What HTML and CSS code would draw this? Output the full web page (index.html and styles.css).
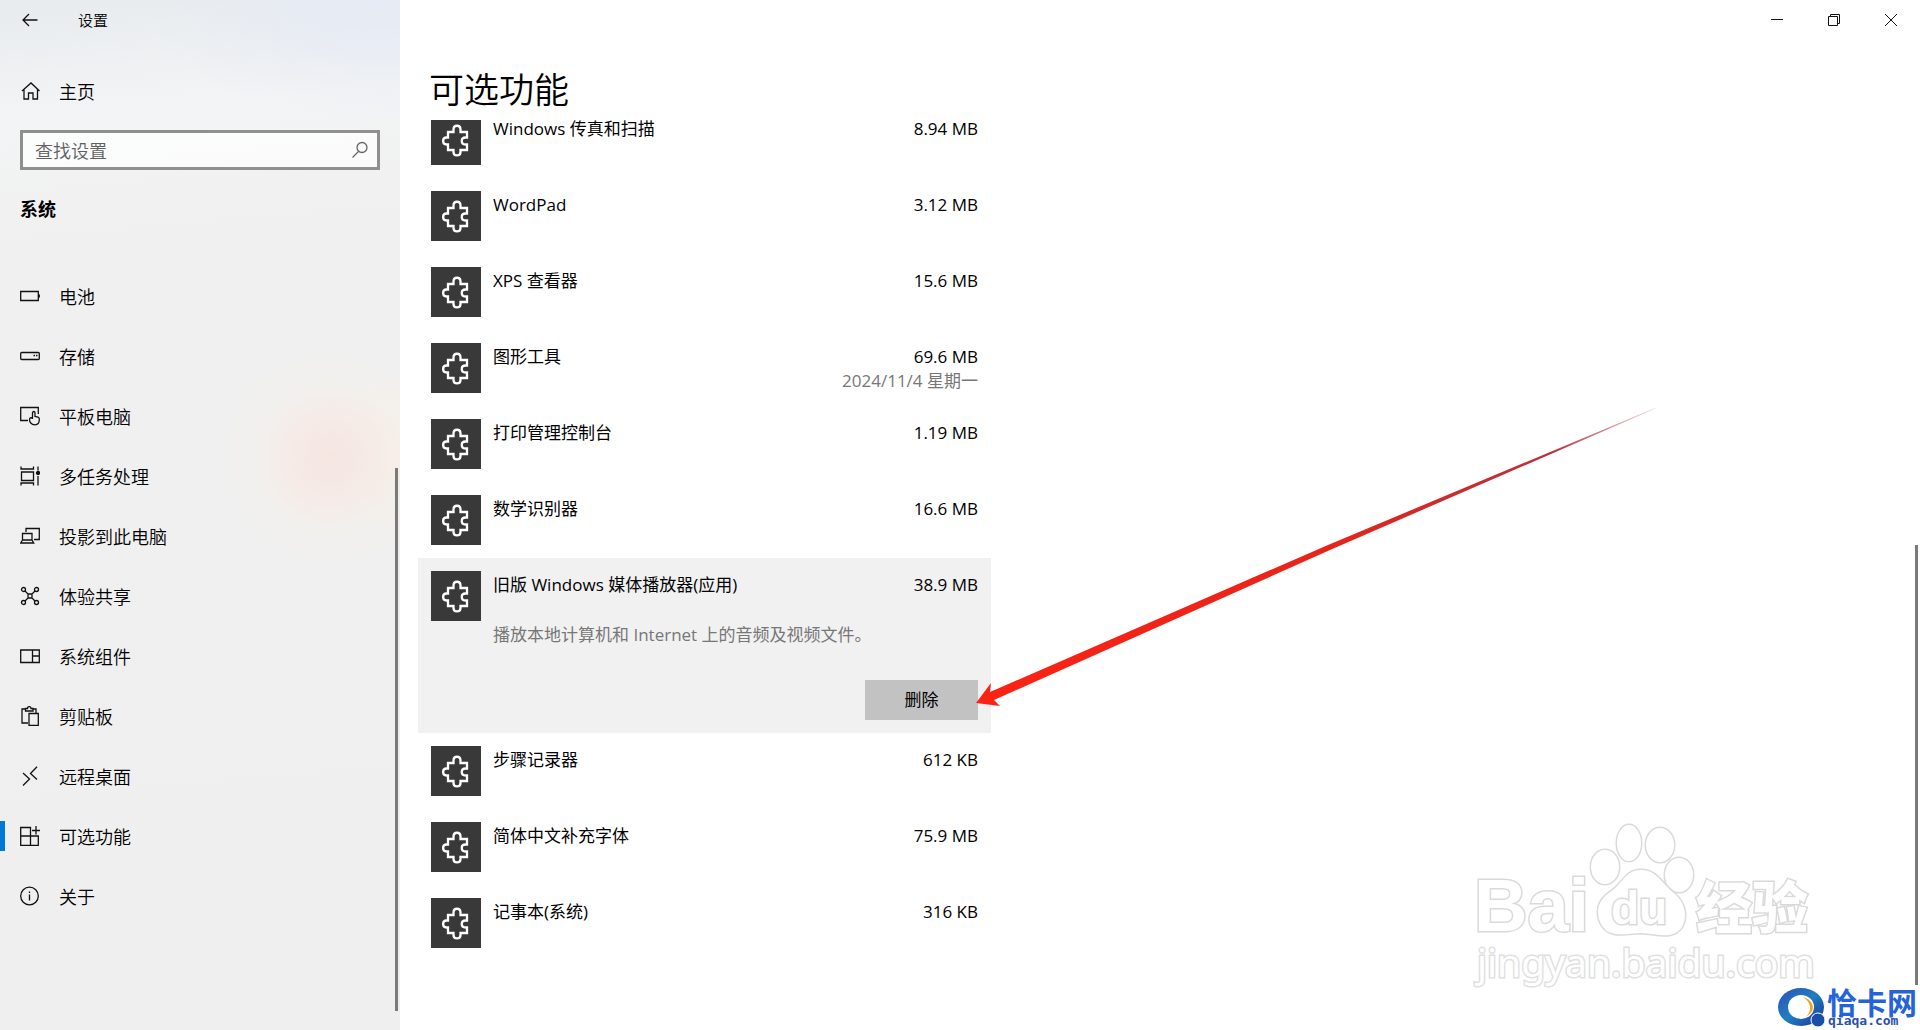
FILE: index.html
```html
<!DOCTYPE html>
<html lang="zh-CN">
<head>
    <meta charset="UTF-8">
    <meta name="viewport" content="width=device-width, initial-scale=1.0">
    <title>设置</title>
    <link rel="stylesheet" href="styles.css">
</head>
<body>
    <!-- shared icon for every feature row -->
    <svg class="sprite" width="0" height="0" aria-hidden="true">
        <symbol id="puzzle" viewBox="0 0 50 50">
            <path d="M17 17H22.5V14.5C22.5 9.5 29.5 9.5 29.5 14.5V17H36V22.5H34.5C29.500 22.5 29.500 29.5 34.5 29.5H36V35H29.5V37C29.5 41.500 22.5 41.500 22.5 37V35H17V29.5H15.5C11 29.5 11 22.5 15.5 22.5H17Z" fill="none" stroke="#fff" stroke-width="2.3"/>
        </symbol>
    </svg>

    <div class="window">
        <aside class="sidebar">
            <div class="app-bar">
                <button class="back" aria-label="返回">
                    <svg width="16" height="14" viewBox="0 0 16 14"><path d="M15.5 7H1M7 1L1 7l6 6"/></svg>
                </button>
                <span class="app-name">设置</span>
            </div>

            <a href="#" class="nav-item home">
                <svg width="20" height="20" viewBox="0 0 20 20"><path d="M2 10L11 2l8.500 8M4 8.500v9.500h4.500v-6h4.500v6h4.500V8.500"/></svg>
                主页
            </a>

            <div class="search">
                <input type="text" id="search" placeholder="查找设置" aria-label="查找设置">
                <svg width="18" height="18" viewBox="0 0 18 18"><circle cx="11" cy="6.500" r="5"/><path d="M7.500 10.500L1.500 16.500"/></svg>
            </div>

            <h2>系统</h2>

            <nav>
                <a href="#" class="nav-item">
                    <svg width="20" height="20" viewBox="0 0 20 20"><path d="M.7 5.500h17.600v9H.7zM19.300 8.500v3"/></svg>
                    电池
                </a>
                <a href="#" class="nav-item">
                    <svg width="20" height="20" viewBox="0 0 20 20"><rect x=".7" y="6.500" width="18.600" height="7" rx="1"/><path d="M13.500 9.500h1.500M16 9.500h1.500"/></svg>
                    存储
                </a>
                <a href="#" class="nav-item">
                    <svg width="20" height="20" viewBox="0 0 20 20"><path d="M8 14.500H.7V1.500h17.600V8M12.500 13V7c0-2 2.500-2 2.500 0v3.500l3 .7q1.500.5 1.300 2.300c0 3-1.300 5.300-4.300 5.300-4 0-5.500-3-5.500-5.300 0-1.500 1.500-2.500 3-1"/></svg>
                    平板电脑
                </a>
                <a href="#" class="nav-item">
                    <svg width="20" height="20" viewBox="0 0 20 20"><path d="M1 .5v2.500h12.500V.5M1.500 6h12v8.500h-12zM1 19.500V17h12.500v2.500M18 .5v4M18 10v9.500"/><circle class="dot" cx="18" cy="7" r="1.500"/></svg>
                    多任务处理
                </a>
                <a href="#" class="nav-item">
                    <svg width="20" height="20" viewBox="0 0 20 20"><path d="M6 6V2.500h13.300v11H14M2.500 14V7.500h9.500V14M2.500 14L.7 17h13L12 14z"/></svg>
                    投影到此电脑
                </a>
                <a href="#" class="nav-item">
                    <svg width="20" height="20" viewBox="0 0 20 20"><circle cx="3.500" cy="3.500" r="2"/><circle cx="16.500" cy="3.500" r="2"/><circle cx="3.500" cy="16.500" r="2"/><circle cx="16.500" cy="16.500" r="2"/><path d="M5 5l3.500 3.500M15 5l-3.500 3.500M5 15l3.500-3.500M15 15l-3.500-3.500M8 8h4v4H8z"/></svg>
                    体验共享
                </a>
                <a href="#" class="nav-item">
                    <svg width="20" height="20" viewBox="0 0 20 20"><path d="M.7 4h18.600v12.500H.7zM12.500 4v12.500M12.500 10h6.800"/></svg>
                    系统组件
                </a>
                <a href="#" class="nav-item">
                    <svg width="20" height="20" viewBox="0 0 20 20"><path d="M8 17H2V3h3.500M12.500 3H16v4M5.500 5V2.500H7.500C7.500 0 11 0 11 2.500h2V5zM9 7.500h9.300v11.800H9z"/></svg>
                    剪贴板
                </a>
                <a href="#" class="nav-item">
                    <svg width="20" height="20" viewBox="0 0 20 20"><path d="M3 7l6.500 6L3 19.500M17 .7L10.500 7.500 17 13.500"/></svg>
                    远程桌面
                </a>
                <a href="#" class="nav-item active">
                    <svg width="20" height="20" viewBox="0 0 20 20"><path d="M10.500 10V1.500H.7v17.800h17.600V10H.7M10.500 10v9.300M16 0v8.500M12 4.500h8"/></svg>
                    可选功能
                </a>
                <a href="#" class="nav-item">
                    <svg width="20" height="20" viewBox="0 0 20 20"><circle cx="9.500" cy="10" r="8.800"/><path d="M9.500 8.500v6M9.500 5.500v1.500"/></svg>
                    关于
                </a>
            </nav>
            <div class="scrollbar sidebar-scroll"></div>
        </aside>

        <main class="content">
            <div class="window-controls">
                <button aria-label="最小化"><svg width="12" height="12" viewBox="0 0 12 12"><path d="M0 5.500h12"/></svg></button>
                <button aria-label="还原"><svg width="12" height="12" viewBox="0 0 12 12"><path d="M.5 2.500h9v9h-9zM2.500 2.500v-2h9v9h-2"/></svg></button>
                <button aria-label="关闭"><svg width="12" height="12" viewBox="0 0 12 12"><path d="M0 0l12 12M12 0L0 12"/></svg></button>
            </div>

            <h1>可选功能</h1>

            <div class="feature-view">
                <ul class="feature-list">
                    <li class="feature">
                        <svg class="tile"><use href="#puzzle"/></svg>
                        <span class="name">Windows 传真和扫描</span>
                        <span class="size">8.94 MB</span>
                    </li>
                    <li class="feature">
                        <svg class="tile"><use href="#puzzle"/></svg>
                        <span class="name">WordPad</span>
                        <span class="size">3.12 MB</span>
                    </li>
                    <li class="feature">
                        <svg class="tile"><use href="#puzzle"/></svg>
                        <span class="name">XPS 查看器</span>
                        <span class="size">15.6 MB</span>
                    </li>
                    <li class="feature">
                        <svg class="tile"><use href="#puzzle"/></svg>
                        <span class="name">图形工具</span>
                        <span class="size">69.6 MB<small>2024/11/4 星期一</small></span>
                    </li>
                    <li class="feature">
                        <svg class="tile"><use href="#puzzle"/></svg>
                        <span class="name">打印管理控制台</span>
                        <span class="size">1.19 MB</span>
                    </li>
                    <li class="feature">
                        <svg class="tile"><use href="#puzzle"/></svg>
                        <span class="name">数学识别器</span>
                        <span class="size">16.6 MB</span>
                    </li>
                    <li class="feature selected">
                        <svg class="tile"><use href="#puzzle"/></svg>
                        <div class="name">
                            旧版 Windows 媒体播放器(应用)
                            <p>播放本地计算机和 Internet 上的音频及视频文件。</p>
                        </div>
                        <span class="size">38.9 MB</span>
                        <div class="actions">
                            <button class="remove">删除</button>
                            <!-- pointer to the remove button -->
                            <svg class="arrow" width="680" height="300" viewBox="0 0 680 300">
                                <defs>
                                    <linearGradient id="fade" x1="0" y1="1" x2="1" y2="0">
                                        <stop offset="0" stop-color="#fb2314"/>
                                        <stop offset=".5" stop-color="#e8241a"/>
                                        <stop offset=".85" stop-color="#b8303a"/>
                                        <stop offset="1" stop-color="#b8303a" stop-opacity=".2"/>
                                    </linearGradient>
                                </defs>
                                <path d="M-2 296L13 276 12 285 350 138 677 1 677.500 1.500 352 143 16 293 22 299Z" fill="url(#fade)"/>
                            </svg>
                        </div>
                    </li>
                    <li class="feature">
                        <svg class="tile"><use href="#puzzle"/></svg>
                        <span class="name">步骤记录器</span>
                        <span class="size">612 KB</span>
                    </li>
                    <li class="feature">
                        <svg class="tile"><use href="#puzzle"/></svg>
                        <span class="name">简体中文补充字体</span>
                        <span class="size">75.9 MB</span>
                    </li>
                    <li class="feature">
                        <svg class="tile"><use href="#puzzle"/></svg>
                        <span class="name">记事本(系统)</span>
                        <span class="size">316 KB</span>
                    </li>
                </ul>
            </div>
            <div class="scrollbar content-scroll"></div>
        </main>

        <svg class="watermark" width="480" height="230" viewBox="0 0 480 230">
            <g class="outline">
                <text class="bai" x="34" y="131">Bai</text>
                <ellipse cx="165" cy="67" rx="14" ry="17"/>
                <ellipse cx="189" cy="43" rx="12" ry="18"/>
                <ellipse cx="220" cy="45" rx="14" ry="17"/>
                <ellipse cx="239" cy="75" rx="14" ry="17"/>
                <path d="M201 70C185 70 183 84 170 92C158 100 155 112 161 124C169 138 183 134 201 133C219 134 233 140 242 127C249 114 243 101 234 93C222 84 217 70 201 70Z"/>
                <text class="du" x="171" y="124">du</text>
                <text class="jingyan" x="256" y="128">经验</text>
            </g>
            <text class="outline url" x="37" y="177">jingyan.baidu.com</text>
            <defs>
                <linearGradient id="ring" x1="0" y1="0" x2="1" y2="1">
                    <stop offset="0" stop-color="#2d4fb8"/>
                    <stop offset=".5" stop-color="#1f7fc0"/>
                    <stop offset="1" stop-color="#1c2f96"/>
                </linearGradient>
            </defs>
            <ellipse cx="361" cy="207" rx="23" ry="19" fill="url(#ring)"/>
            <ellipse cx="361" cy="207" rx="13" ry="12" fill="#fff"/>
            <path d="M363 197c11 3 14 14 3 20c6-6 6-14-3-20z" fill="#f6a21c"/>
            <circle cx="378" cy="220" r="7" fill="#1a4fa8" stroke="#fff"/>
            <text class="site" x="387" y="214">恰卡网</text>
            <text class="site-url" x="388" y="225">qiaqa.com</text>
        </svg>
    </div>
</body>
</html>
```
FILE: styles.css
```css
* {
    margin: 0;
    padding: 0;
    box-sizing: border-box;
}

body {
    font-family: 'Noto Sans CJK SC', sans-serif;
    font-size: 18px;
    font-weight: 350;
    line-height: 24px;
    color: #000;
    background: #fff;
}

button,
input {
    font: inherit;
    color: inherit;
    border: none;
    background: none;
}

svg {
    flex-shrink: 0;
}

.sprite {
    position: absolute;
}

.window {
    position: relative;
    display: flex;
    height: 100vh;
    overflow: hidden;
}

/* Sidebar */
.sidebar {
    position: relative;
    width: 400px;
    flex-shrink: 0;
    background:
        radial-gradient(circle at 330px 458px, #f5e6e1 0, rgba(246, 234, 230, 0.9) 40px, rgba(243, 240, 235, 0.6) 75px, rgba(240, 240, 240, 0) 110px),
        radial-gradient(circle at 400px 450px, #faeee2 0, rgba(250, 238, 226, 0) 80px),
        radial-gradient(ellipse 240px 120px at 380px 0, #e5eaf4 0, rgba(229, 234, 244, 0) 100%),
        linear-gradient(175deg, #e7ebee 0, #f3f4f5 120px, #f0f0f0 240px, #efefef 100%);
}

.sidebar svg,
.window-controls svg {
    fill: none;
    stroke: #111;
    stroke-width: 1.3;
}

.sidebar .dot {
    fill: #111;
}

.app-bar {
    display: flex;
    align-items: center;
    height: 40px;
    padding-left: 22px;
    gap: 40px;
    font-size: 15px;
}

.back {
    display: flex;
}

.nav-item {
    display: flex;
    align-items: center;
    gap: 19px;
    height: 60px;
    padding-left: 20px;
    color: #000;
    text-decoration: none;
}

.home {
    margin: 21px 0 9px;
}

.nav-item.active {
    background: linear-gradient(#0078d7, #0078d7) 0 center / 5px 30px no-repeat;
}

.search {
    display: flex;
    align-items: center;
    height: 40px;
    margin: 0 20px;
    padding: 0 8px 0 12px;
    border: 3px solid #8f8f8f;
    background: rgba(255, 255, 255, 0.7);
}

.search input {
    flex: 1;
    min-width: 0;
    outline: none;
}

.search input::placeholder {
    color: #606060;
    opacity: 1;
}

.sidebar .search svg {
    stroke: #666;
}

.sidebar h2 {
    margin: 26px 20px 46px;
    font-size: 18px;
    font-weight: 700;
}

.scrollbar {
    position: absolute;
    width: 3px;
    background: #7a7a7a;
}

.sidebar-scroll {
    right: 2px;
    top: 468px;
    bottom: 19px;
}

/* Content */
.content {
    position: relative;
    display: flex;
    flex-direction: column;
    flex: 1;
}

.window-controls {
    display: flex;
    justify-content: flex-end;
    height: 40px;
    padding-right: 1px;
}

.window-controls button {
    display: flex;
    align-items: center;
    justify-content: center;
    width: 57px;
}

.window-controls svg {
    stroke-width: 1;
}

h1 {
    margin: 24px 29px 8px;
    font-size: 35px;
    font-weight: 350;
    line-height: 48px;
}

.feature-view {
    flex: 1;
    overflow: hidden;
    padding-left: 18px;
    font-family: 'Open Sans', 'Noto Sans CJK SC', sans-serif;
    font-size: 17px;
    font-weight: 400;
}

/* list is scrolled to the end, the first row is partly cut off */
.feature-list {
    max-width: 573px;
    margin-top: -18px;
    list-style: none;
}

.feature {
    display: flex;
    flex-wrap: wrap;
    align-items: flex-start;
    padding: 13px;
}

.tile {
    width: 50px;
    height: 50px;
    margin-right: 12px;
    background: #393939;
}

.name {
    flex: 1;
    padding-top: 2px;
}

.size {
    padding-top: 2px;
    text-align: right;
}

.size small {
    display: block;
    font-size: 17px;
    color: #777;
}

.selected {
    background: #f1f1f1;
}

.selected p {
    margin-top: 26px;
    color: #777;
}

.actions {
    position: relative;
    display: flex;
    justify-content: flex-end;
    width: 100%;
    margin-top: 33px;
}

.remove {
    width: 113px;
    height: 40px;
    background: #c2c2c2;
}

.arrow {
    position: absolute;
    left: 100%;
    bottom: 13px;
    overflow: visible;
}

.content-scroll {
    right: 2px;
    top: 545px;
    bottom: 45px;
}

/* Watermark */
.watermark {
    position: absolute;
    right: 0;
    bottom: 0;
}

.outline {
    fill: #fff;
    stroke: #dadada;
    stroke-width: 3;
    paint-order: stroke;
}

.bai {
    font: bold 74px 'Liberation Sans', sans-serif;
}

.du {
    font: bold 46px 'Liberation Sans', sans-serif;
}

.jingyan {
    font-size: 56px;
    font-weight: 900;
}

.url {
    font: 39px 'Noto Sans', sans-serif;
    stroke: #e0e0e0;
}

.site {
    font-size: 30px;
    font-weight: 700;
    fill: #2464d8;
}

.site-url {
    font: bold 13px 'DejaVu Sans Mono', monospace;
    fill: #2a4fb0;
}
```
